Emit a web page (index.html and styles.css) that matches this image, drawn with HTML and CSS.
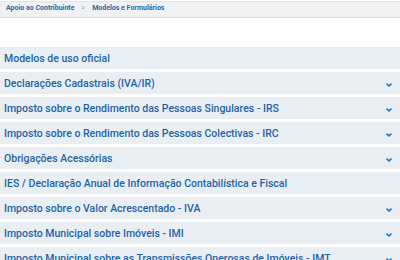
FILE: index.html
```html
<!DOCTYPE html>
<html lang="pt">
<head>
	<meta charset="UTF-8">
	<title>Modelos e Formulários</title>
	<link rel="stylesheet" href="styles.css">
</head>
<body>
	<div class="crumbs">
		<a href="#">Apoio ao Contribuinte</a>
		<span class="sep">&gt;</span>
		<a href="#">Modelos e Formulários</a>
	</div>
	<ul class="menu">
		<li><span>Modelos de uso oficial</span></li>
		<li><span>Declarações Cadastrais (IVA/IR)</span><svg class="arr" viewBox="0 0 6 4"><path d="M0 1.2 L3 4 L6 1.2 L5 0 L3 1.8 L1 0 Z"/></svg></li>
		<li><span>Imposto sobre o Rendimento das Pessoas Singulares - IRS</span><svg class="arr" viewBox="0 0 6 4"><path d="M0 1.2 L3 4 L6 1.2 L5 0 L3 1.8 L1 0 Z"/></svg></li>
		<li><span>Imposto sobre o Rendimento das Pessoas Colectivas - IRC</span><svg class="arr" viewBox="0 0 6 4"><path d="M0 1.2 L3 4 L6 1.2 L5 0 L3 1.8 L1 0 Z"/></svg></li>
		<li><span>Obrigações Acessórias</span><svg class="arr" viewBox="0 0 6 4"><path d="M0 1.2 L3 4 L6 1.2 L5 0 L3 1.8 L1 0 Z"/></svg></li>
		<li><span>IES / Declaração Anual de Informação Contabilística e Fiscal</span></li>
		<li><span>Imposto sobre o Valor Acrescentado - IVA</span><svg class="arr" viewBox="0 0 6 4"><path d="M0 1.2 L3 4 L6 1.2 L5 0 L3 1.8 L1 0 Z"/></svg></li>
		<li><span>Imposto Municipal sobre Imóveis - IMI</span><svg class="arr" viewBox="0 0 6 4"><path d="M0 1.2 L3 4 L6 1.2 L5 0 L3 1.8 L1 0 Z"/></svg></li>
		<li><span>Imposto Municipal sobre as Transmissões Onerosas de Imóveis - IMT</span><svg class="arr" viewBox="0 0 6 4"><path d="M0 1.2 L3 4 L6 1.2 L5 0 L3 1.8 L1 0 Z"/></svg></li>
	</ul>
</body>
</html>
```
FILE: styles.css
```css
*{
	margin:0;
	padding:0;
}
body{
	font-family: Roboto, "Liberation Sans", sans-serif;
	background: #fff;
}
.crumbs{
	margin-top:1px;
	height:15px;
	padding-left:6px;
	background:#f0f1f3;
	border-top:1px solid #e2e3e6;
	border-bottom:1px solid #dcdde0;
	font-size:7px;
	font-weight:bold;
	line-height:12px;
	display:flex;
	gap:7px;
}
.crumbs a{
	color:#2a6aa8;
	text-decoration:none;
}
.crumbs .sep{
	color:#a0a4aa;
	font-weight:normal;
}
.menu{
	list-style:none;
	margin-top:29px;
	display:flex;
	flex-direction:column;
	gap:3px;
}
.menu li{
	height:22px;
	background:#e9eef3;
	display:flex;
	align-items:center;
	justify-content:space-between;
	padding:0 8px 0 4px;
	font-size:10.5px;
	font-weight:500;
	color:#1f64a6;
	white-space:nowrap;
	overflow:hidden;
}
.arr{
	width:6px;
	height:4px;
	fill:#1c78c6;
	flex:none;
	margin-top:3px;
}
```
